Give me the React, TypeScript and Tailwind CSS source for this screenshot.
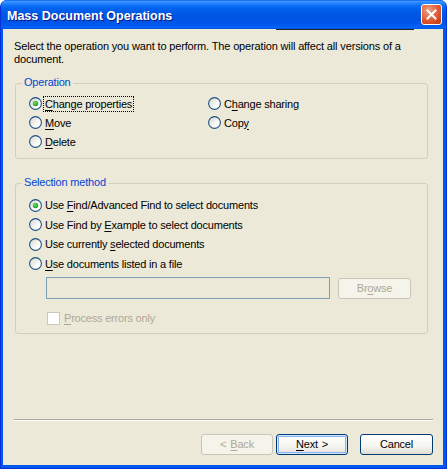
import React from "react";

function Radio({ checked }: { checked?: boolean }) {
  return (
    <svg width="13" height="13" viewBox="0 0 13 13" className="shrink-0">
      <defs>
        <linearGradient id="rg" x1="0" y1="0" x2="1" y2="1">
          <stop offset="0" stopColor="#D6D5CB" />
          <stop offset="0.7" stopColor="#FFFFFF" />
          <stop offset="1" stopColor="#FFFFFF" />
        </linearGradient>
        <radialGradient id="dot" cx="0.4" cy="0.35" r="0.65">
          <stop offset="0" stopColor="#6EE36A" />
          <stop offset="1" stopColor="#1E9A1E" />
        </radialGradient>
      </defs>
      <circle cx="6.5" cy="6.5" r="5.9" fill="url(#rg)" stroke="#1C5180" strokeWidth="1.1" />
      {checked && <circle cx="6.5" cy="6.5" r="2.7" fill="url(#dot)" />}
    </svg>
  );
}

function U({ children }: { children: React.ReactNode }) {
  return <span className="underline underline-offset-[2px] decoration-[1px]">{children}</span>;
}

function RadioRow({
  checked,
  focus,
  children,
  h = "h-[19px]",
}: {
  checked?: boolean;
  focus?: boolean;
  children: React.ReactNode;
  h?: string;
}) {
  return (
    <div className={`flex items-center gap-[2px] ${h}`}>
      <Radio checked={checked} />
      <span
        className={`px-[1px] leading-[14px] whitespace-nowrap ${
          focus ? "outline outline-1 outline-dotted outline-black" : ""
        }`}
      >
        {children}
      </span>
    </div>
  );
}

function Group({
  label,
  className,
  children,
}: {
  label: string;
  className?: string;
  children: React.ReactNode;
}) {
  return (
    <div className={`relative ml-[12px] w-[413px] border border-[#D0D0BF] rounded-[3px] ${className ?? ""}`}>
      <span className="absolute top-[-8px] left-[6px] px-[2px] bg-[#ECE9D8] text-[#0046D5] leading-[13px] whitespace-nowrap">
        {label}
      </span>
      {children}
    </div>
  );
}

export default function App() {
  return (
    <div className="w-[447px] h-[469px] bg-white font-['Liberation_Sans',Arial,sans-serif] text-[11px] tracking-[-0.2px] text-black">
      <div className="relative w-full h-full flex flex-col rounded-t-[7px] overflow-hidden bg-[#0058EE] border-l border-r border-b border-[#0831D9]">
        {/* Title bar */}
        <div className="h-[29px] shrink-0 flex items-center pl-[6px] pr-[4px] bg-[linear-gradient(180deg,#0A5FF0_0%,#3D95FF_5%,#2A88FF_10%,#0D72F8_18%,#0262EE_30%,#0057E5_48%,#0054E3_65%,#0056EA_80%,#005CF3_90%,#0064F8_95%,#0052D6_100%)]">
          <span className="flex-1 pt-[3px] text-white font-bold text-[12.5px] tracking-normal [text-shadow:1px_1px_0_#0A1883]">
            Mass Document Operations
          </span>
          <div className="w-[21px] h-[21px] rounded-[3px] border border-white flex items-center justify-center bg-[radial-gradient(circle_at_35%_30%,#F0A488_0%,#E2643F_45%,#D2461F_75%,#B73A16_100%)]">
            <svg width="11" height="11" viewBox="0 0 11 11">
              <path d="M1.5 1.5 L9.5 9.5 M9.5 1.5 L1.5 9.5" stroke="#FFFFFF" strokeWidth="2" strokeLinecap="square" />
            </svg>
          </div>
        </div>

        {/* Frame body */}
        <div className="flex-1 flex pl-[2px] pr-[3px] pb-[3px]">
          <div className="flex-1 flex flex-col bg-[#ECE9D8]">
            <p className="pl-[11px] pt-[11px] leading-[13px] tracking-[-0.15px]">
              Select the operation you want to perform. The operation will affect all versions of a
              <br />
              document.
            </p>

            <Group label="Operation" className="mt-[17px] pt-[10px] pb-[7px]">
              <div className="grid grid-cols-[179px_1fr] pl-[13px]">
                <RadioRow checked focus>
                  <U>C</U>hange properties
                </RadioRow>
                <RadioRow>
                  C<U>h</U>ange sharing
                </RadioRow>
                <RadioRow>
                  <U>M</U>ove
                </RadioRow>
                <RadioRow>
                  Cop<U>y</U>
                </RadioRow>
                <RadioRow>
                  <U>D</U>elete
                </RadioRow>
              </div>
            </Group>

            <Group label="Selection method" className="mt-[24px] pt-[11px] pb-[8px]">
              <div className="pl-[13px]">
                <RadioRow checked h="h-[20px]">
                  Use <U>F</U>ind/Advanced Find to select documents
                </RadioRow>
                <RadioRow>
                  Use Find by <U>E</U>xample to select documents
                </RadioRow>
                <RadioRow h="h-[20px]">
                  Use currently <U>s</U>elected documents
                </RadioRow>
                <RadioRow>
                  <U>U</U>se documents listed in a file
                </RadioRow>
              </div>
              <div className="flex items-center pl-[30px] mt-[4px]">
                <div className="w-[284px] h-[22px] border border-[#7F9DB9]" />
                <div className="ml-[8px] w-[73px] h-[21px] rounded-[3px] border border-[#C9C7BA] bg-[#F5F4EA] flex items-center justify-center text-[#ACA899]">
                  Br<U>o</U>wse
                </div>
              </div>
              <div className="flex items-center h-[13px] mt-[13px] pl-[31px] gap-[4px] text-[#ACA899]">
                <div className="w-[13px] h-[13px] border border-[#CAC8BB] bg-white" />
                <span className="leading-[13px]">
                  <U>P</U>rocess errors only
                </span>
              </div>
            </Group>

            <div className="mt-auto ml-[11px] mr-[10px] border-t border-t-[#ACA899] border-b border-b-white" />

            <div className="flex justify-end pr-[10px] mt-[13px] mb-[10px]">
              <div className="w-[72px] h-[21px] rounded-[3px] border border-[#C9C7BA] bg-[#F5F4EA] flex items-center justify-center gap-[4px] text-[#ACA899]">
                <span>{"<"}</span>
                <span>
                  <U>B</U>ack
                </span>
              </div>
              <div className="ml-[3px] w-[72px] h-[21px] rounded-[3px] border border-[#003C74] bg-[linear-gradient(180deg,#FFFFFF_0%,#F4F4F0_60%,#E3E1D8_100%)] shadow-[inset_0_0_0_1px_#CEE7FF,inset_0_0_0_2px_#8BB0EC] flex items-center justify-center gap-[4px]">
                <span>
                  <U>N</U>ext
                </span>
                <span>{">"}</span>
              </div>
              <div className="ml-[12px] w-[73px] h-[21px] rounded-[3px] border border-[#003C74] bg-[linear-gradient(180deg,#FFFFFF_0%,#F4F4F0_60%,#E0DDD2_100%)] flex items-center justify-center">
                Cancel
              </div>
            </div>
          </div>
        </div>

        {/* stray dark line under title bar */}
        <div className="absolute left-[275px] top-[29px] w-[138px] h-[1px] bg-[#222222]" />
      </div>
    </div>
  );
}
